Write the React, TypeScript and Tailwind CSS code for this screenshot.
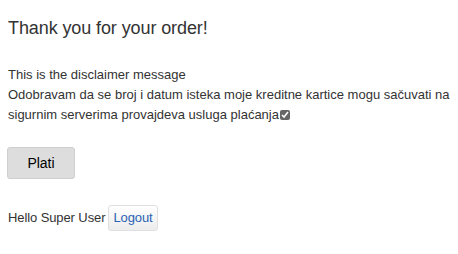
export default function App() {
  return (
    <div className="w-[458px] h-[254px] bg-white px-2 font-['Liberation_Sans',Arial,sans-serif] text-[#333]">
      <h3 className="pt-[17px] text-[18px] leading-[22px] tracking-[-0.1px]">Thank you for your order!</h3>

      <div className="mt-[26px] text-[13px] leading-[20px]">
        <p>This is the disclaimer message</p>
        <p>
          Odobravam da se broj i datum isteka moje kreditne kartice mogu sačuvati na sigurnim serverima provajdeva usluga plaćanja
          <input type="checkbox" defaultChecked className="ml-px align-[-1px] w-[10px] h-[10px] accent-[#666]" />
        </p>
      </div>

      <button className="mt-[22px] -ml-px w-[68px] h-[32px] rounded-[3px] border border-[#cfcfcf] bg-[#dddddd] text-[14px] text-black">
        Plati
      </button>

      <div className="mt-[26px] flex items-center text-[13px] tracking-[-0.1px]">
        <span>Hello Super User</span>
        <button className="ml-[3px] h-[26px] px-[4px] rounded-[3px] border border-[#e0e0e0] bg-gradient-to-b from-white to-[#ececec] text-[#2a62b3] text-[13px]">
          Logout
        </button>
      </div>
    </div>
  );
}
